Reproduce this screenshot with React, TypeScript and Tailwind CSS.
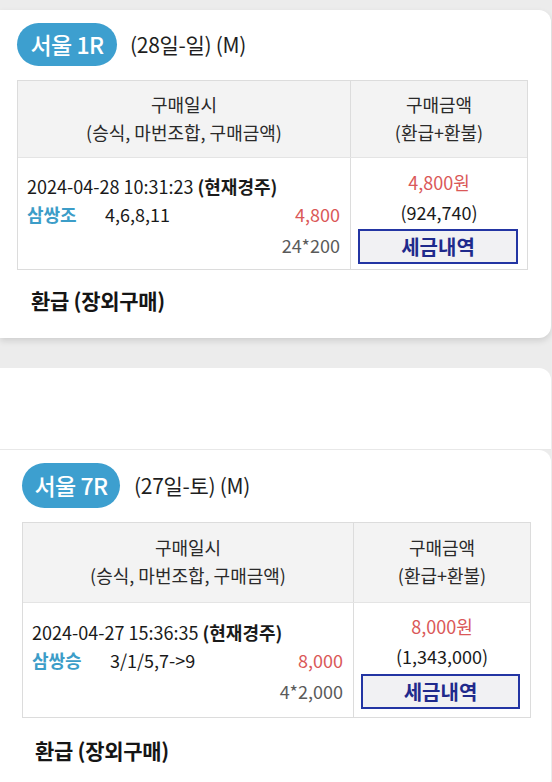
type Variant = {
  card: string;
  badge: string;
  title: string;
  table: string;
  leftCol: string;
  header: string;
  body: string;
  leftBody: string;
  rightBody: string;
  btn: string;
  footer: string;
};

const first: Variant = {
  card: "h-[328px] pt-[13px] shadow-[0_3px_6px_rgba(0,0,0,0.12)]",
  badge: "ml-[17px] h-[43px] w-[100px]",
  title: "ml-[13px]",
  table: "mt-[14px] ml-[17px] w-[511px]",
  leftCol: "w-[333px]",
  header: "h-[76px] pt-[9px]",
  body: "h-[111px]",
  leftBody: "pt-[14px]",
  rightBody: "pt-[10px]",
  btn: "mt-px ml-[7px] h-[35px] w-[160px]",
  footer: "mt-[18px] pl-[31px]",
};

const second: Variant = {
  card: "h-[340px] pt-[13px]",
  badge: "ml-[22px] h-[45px] w-[98px]",
  title: "ml-[14px]",
  table: "mt-[14px] ml-[22px] w-[509px]",
  leftCol: "w-[331px]",
  header: "h-[79px] pt-[10px]",
  body: "h-[114px]",
  leftBody: "pt-[15px]",
  rightBody: "pt-[9px]",
  btn: "mt-[2px] ml-[7px] h-[35px] w-[159px]",
  footer: "mt-[20px] pl-[35px]",
};

type Race = {
  v: Variant;
  badge: string;
  day: string;
  date: string;
  kind: string;
  combo: string;
  amount: string;
  unit: string;
  total: string;
  refund: string;
};

const RaceCard = ({ r }: { r: Race }) => {
  const v = r.v;
  return (
    <div className={`bg-white rounded-tr-[12px] rounded-br-[12px] mr-px ${v.card}`}>
      <div className="flex items-center">
        <div
          className={`flex items-center justify-center rounded-full bg-[#3d9fcf] text-white text-[23px] font-medium tracking-[-0.5px] ${v.badge}`}
        >
          {r.badge}
        </div>
        <p className={`text-[21px] tracking-[-0.3px] text-[#1e1e1e] ${v.title}`}>{r.day}</p>
      </div>

      <div className={`border border-[#dcdcdc] ${v.table}`}>
        <div className="flex bg-[#f3f3f3] border-b border-[#e4e4e4]">
          <div
            className={`flex flex-col items-center border-r border-[#dcdcdc] text-[18px] leading-[28px] text-[#2a2a2a] ${v.header} ${v.leftCol}`}
          >
            <p>구매일시</p>
            <p>(승식, 마번조합, 구매금액)</p>
          </div>
          <div
            className={`flex-1 flex flex-col items-center text-[18px] leading-[28px] text-[#2a2a2a] ${v.header}`}
          >
            <p>구매금액</p>
            <p>(환급+환불)</p>
          </div>
        </div>

        <div className={`flex ${v.body}`}>
          <div
            className={`border-r border-[#dcdcdc] pl-[9px] pr-[10px] text-[18px] ${v.leftBody} ${v.leftCol}`}
          >
            <p className="leading-[28px] text-[#1a1a1a] whitespace-nowrap">
              {r.date} <span className="font-semibold">(현재경주)</span>
            </p>
            <div className="flex leading-[28px]">
              <span className="w-[78px] font-semibold text-[#3c9dc8]">{r.kind}</span>
              <span className="text-[#1a1a1a]">{r.combo}</span>
              <span className="ml-auto text-[#da5858]">{r.amount}</span>
            </div>
            <p className="leading-[34px] text-right text-[#5a5a5a]">{r.unit}</p>
          </div>
          <div className={`flex-1 flex flex-col text-[18px] ${v.rightBody}`}>
            <p className="leading-[28px] text-center text-[#da5858]">{r.total}</p>
            <p className="leading-[32px] text-center text-[#1a1a1a]">{r.refund}</p>
            <button
              className={`flex items-center justify-center border-2 border-[#2335a3] bg-[#f1f1f3] text-[20px] font-semibold text-[#1f2a8c] ${v.btn}`}
            >
              세금내역
            </button>
          </div>
        </div>
      </div>

      <p className={`text-[21px] leading-[24px] font-semibold tracking-[-0.3px] text-[#151515] ${v.footer}`}>
        환급 (장외구매)
      </p>
    </div>
  );
};

const App = () => {
  return (
    <div
      className="h-[782px] overflow-hidden bg-[#ececec] pt-[10px]"
      style={{ fontFamily: '"Noto Sans CJK KR", "Noto Sans", sans-serif' }}
    >
      <RaceCard
        r={{
          v: first,
          badge: "서울 1R",
          day: "(28일-일) (M)",
          date: "2024-04-28 10:31:23",
          kind: "삼쌍조",
          combo: "4,6,8,11",
          amount: "4,800",
          unit: "24*200",
          total: "4,800원",
          refund: "(924,740)",
        }}
      />
      <div className="mt-[30px] h-[82px] mr-px bg-white rounded-tr-[12px] border-b border-[#e8e8e8]" />
      <RaceCard
        r={{
          v: second,
          badge: "서울 7R",
          day: "(27일-토) (M)",
          date: "2024-04-27 15:36:35",
          kind: "삼쌍승",
          combo: "3/1/5,7->9",
          amount: "8,000",
          unit: "4*2,000",
          total: "8,000원",
          refund: "(1,343,000)",
        }}
      />
    </div>
  );
};

export default App;
